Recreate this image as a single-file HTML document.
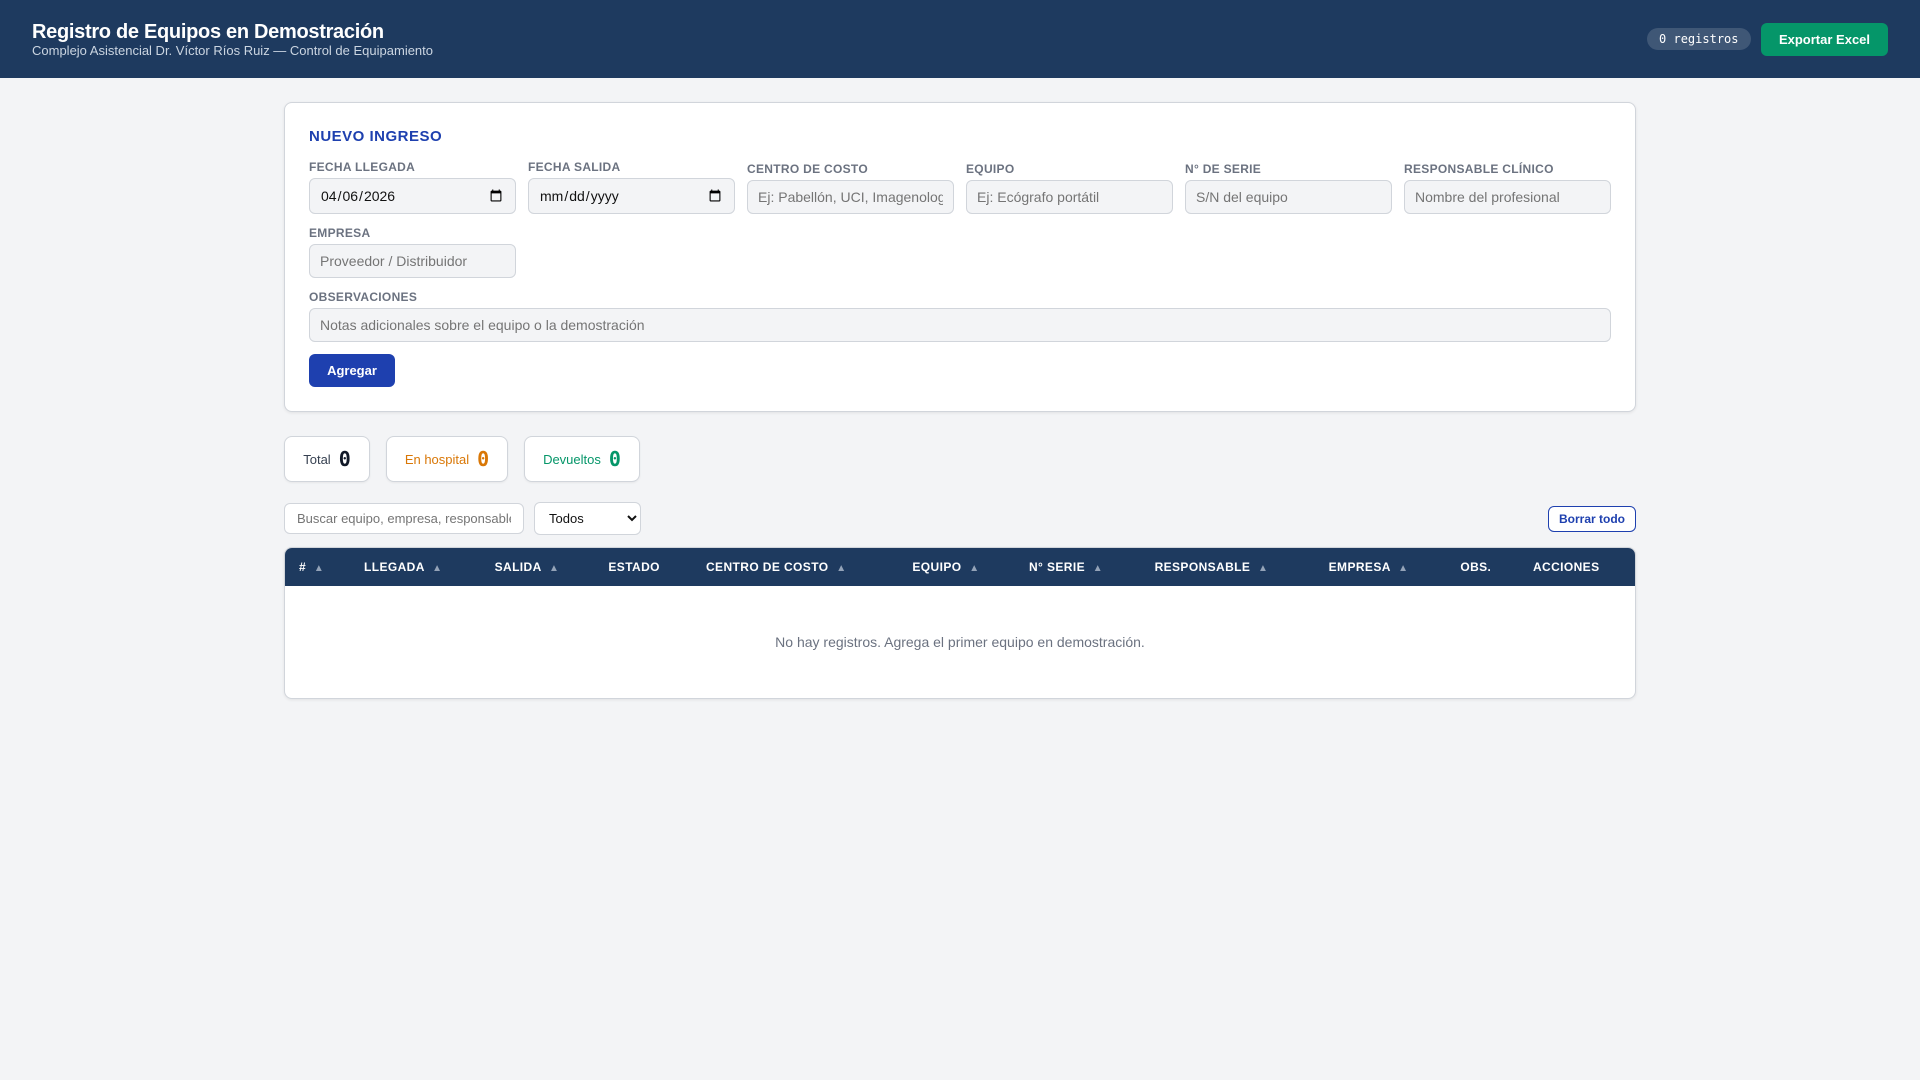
<!DOCTYPE html>
<html lang="es"><head><meta charset="utf-8"><title>Registro de Equipos en Demostración</title>
<style>
*{box-sizing:border-box;margin:0;padding:0}
html,body{width:1920px;height:1080px;overflow:hidden}
body{background:#f3f4f6;font-family:"Liberation Sans",Arial,sans-serif;color:#1f2937;font-size:14px}
header{height:78px;background:#1e3a5f;color:#fff;display:flex;align-items:center;justify-content:space-between;padding:0 32px}
h1{font-size:20px;font-weight:700;line-height:23px;letter-spacing:-.3px}
.sub{font-size:13px;line-height:15px;color:#cbd5e1;margin-top:-1px}
.hr{display:flex;align-items:center;gap:10px}
.badge{font-family:"DejaVu Sans Mono",monospace;font-size:12px;background:rgba(255,255,255,.15);border-radius:999px;padding:4px 12.5px;line-height:14px;margin-top:-1px}
.exp{background:#059669;color:#fff;border:0;border-radius:6px;font:700 13px "Liberation Sans",sans-serif;width:127px;height:33px}
main{width:1400px;margin:0 auto;padding:24px}
.card{background:#fff;border:1px solid #d1d5db;border-radius:8px;box-shadow:0 1px 3px rgba(0,0,0,.08)}
.form{height:310px;padding:24px;margin-bottom:24px}
h2{font-size:15px;font-weight:700;color:#1e40af;text-transform:uppercase;letter-spacing:.5px;line-height:17px;margin-bottom:15px;margin-top:1px}
.grid{display:grid;grid-template-columns:repeat(6,207px);gap:12px;align-items:end}
label{display:block;font-size:12px;font-weight:700;color:#6b7280;text-transform:uppercase;letter-spacing:.3px;line-height:14px;margin-bottom:4px}
.grid input,.obs input{width:100%;background:#f3f4f6;border:1px solid #d1d5db;border-radius:6px;padding:8px 10px;font:14px "Liberation Sans",sans-serif;color:#111;height:34px}
.grid input[type=date]{height:36px;padding:8px 10px}
::placeholder{color:#757575;opacity:1}
.obs{margin-top:12px}
.add{display:block;margin-top:12px;width:86px;height:33px;background:#1e40af;color:#fff;border:0;border-radius:6px;font:700 13px "Liberation Sans",sans-serif}
.stats{display:flex;gap:16px;margin-bottom:20px}
.stat{height:46px;background:#fff;border:1px solid #d1d5db;border-radius:8px;box-shadow:0 1px 2px rgba(0,0,0,.06);display:flex;align-items:center;justify-content:center;gap:8px;font-size:13px;color:#374151}
.stat b{font:700 20px "DejaVu Sans Mono",monospace;color:#111827}
.stat.o,.stat.o b{color:#d97706}.stat.g,.stat.g b{color:#059669}
.tools{height:33px;display:flex;align-items:center;gap:10px;margin-bottom:12px;position:relative}
.tools input{width:240px;height:31px;background:#fff;border:1px solid #d1d5db;border-radius:6px;padding:0 12px;font:13px "Liberation Sans",sans-serif}
.tools select{width:107px;height:33px;background:#fff;border:1px solid #d1d5db;border-radius:6px;padding:0 10px;font:13px "Liberation Sans",sans-serif;color:#111}
.del{position:absolute;right:0;top:4px;width:88px;height:26px;background:#fff;border:1px solid #1e40af;border-radius:6px;color:#1e40af;font:700 12px "Liberation Sans",sans-serif}
.tbl{height:152px;overflow:hidden}
table{width:1350px;table-layout:fixed;border-collapse:collapse}
th{background:#1e3a5f;color:#fff;height:38px;padding:0 14px;text-align:left;font-size:12px;font-weight:700;letter-spacing:.4px;text-transform:uppercase;white-space:nowrap}
th i{font-style:normal;font-size:10px;color:#94a3b8;margin-left:4px;letter-spacing:0}
td{text-align:center;color:#6b7280;height:112px;font-size:14px}
</style></head><body>
<header><div><h1>Registro de Equipos en Demostración</h1><div class="sub">Complejo Asistencial Dr. Víctor Ríos Ruiz — Control de Equipamiento</div></div>
<div class="hr"><span class="badge">0 registros</span><button class="exp">Exportar Excel</button></div></header>
<main>
<section class="card form"><h2>Nuevo ingreso</h2>
<div class="grid">
<div><label>Fecha llegada</label><input type="date" value="2026-04-06"></div>
<div><label>Fecha salida</label><input type="date"></div>
<div><label>Centro de costo</label><input placeholder="Ej: Pabellón, UCI, Imagenología"></div>
<div><label>Equipo</label><input placeholder="Ej: Ecógrafo portátil"></div>
<div><label>N° de serie</label><input placeholder="S/N del equipo"></div>
<div><label>Responsable clínico</label><input placeholder="Nombre del profesional"></div>
<div><label>Empresa</label><input placeholder="Proveedor / Distribuidor"></div>
</div>
<div class="obs"><label>Observaciones</label><input placeholder="Notas adicionales sobre el equipo o la demostración"></div>
<button class="add">Agregar</button></section>
<div class="stats">
<div class="stat" style="width:86px">Total <b>0</b></div>
<div class="stat o" style="width:122px">En hospital <b>0</b></div>
<div class="stat g" style="width:116px">Devueltos <b>0</b></div></div>
<div class="tools"><input placeholder="Buscar equipo, empresa, responsable..."><select><option>Todos</option></select><button class="del">Borrar todo</button></div>
<div class="card tbl"><table><colgroup><col style="width:65px"><col style="width:130.6px"><col style="width:113.8px"><col style="width:97.6px"><col style="width:206.4px"><col style="width:116.6px"><col style="width:125.6px"><col style="width:174.1px"><col style="width:131.7px"><col style="width:72.6px"><col></colgroup>
<thead><tr><th># <i>▲</i></th><th>Llegada <i>▲</i></th><th>Salida <i>▲</i></th><th>Estado</th><th>Centro de costo <i>▲</i></th><th>Equipo <i>▲</i></th><th>N° serie <i>▲</i></th><th>Responsable <i>▲</i></th><th>Empresa <i>▲</i></th><th>Obs.</th><th>Acciones</th></tr></thead>
<tbody><tr><td colspan="11">No hay registros. Agrega el primer equipo en demostración.</td></tr></tbody></table></div>
</main></body></html>
